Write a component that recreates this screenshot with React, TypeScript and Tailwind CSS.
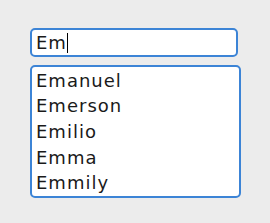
import React from "react";

const names = ["Emanuel", "Emerson", "Emilio", "Emma", "Emmily"];

export default function App() {
  return (
    <div
      className="w-[270px] h-[223px] bg-[#ececec] pt-[28px] pl-[30px] flex flex-col gap-[8px]"
      style={{ fontFamily: '"DejaVu Sans", sans-serif' }}
    >
      <div className="w-[208px] h-[29px] bg-white border-2 border-[#3c84d6] rounded-[5px] flex items-center pl-[4px] text-[18px] tracking-[1px] text-[#1a1a1a]">
        <span className="leading-none">Em</span>
        <span className="w-[1.5px] h-[20px] bg-black" />
      </div>
      <div className="w-[211px] h-[133px] bg-white border-2 border-[#3c84d6] rounded-[5px] flex flex-col pl-[4px] pt-[1px] text-[18px] tracking-[1px] text-[#1a1a1a]">
        {names.map((n) => (
          <div key={n} className="h-[25.6px] flex items-center leading-none">
            {n}
          </div>
        ))}
      </div>
    </div>
  );
}
